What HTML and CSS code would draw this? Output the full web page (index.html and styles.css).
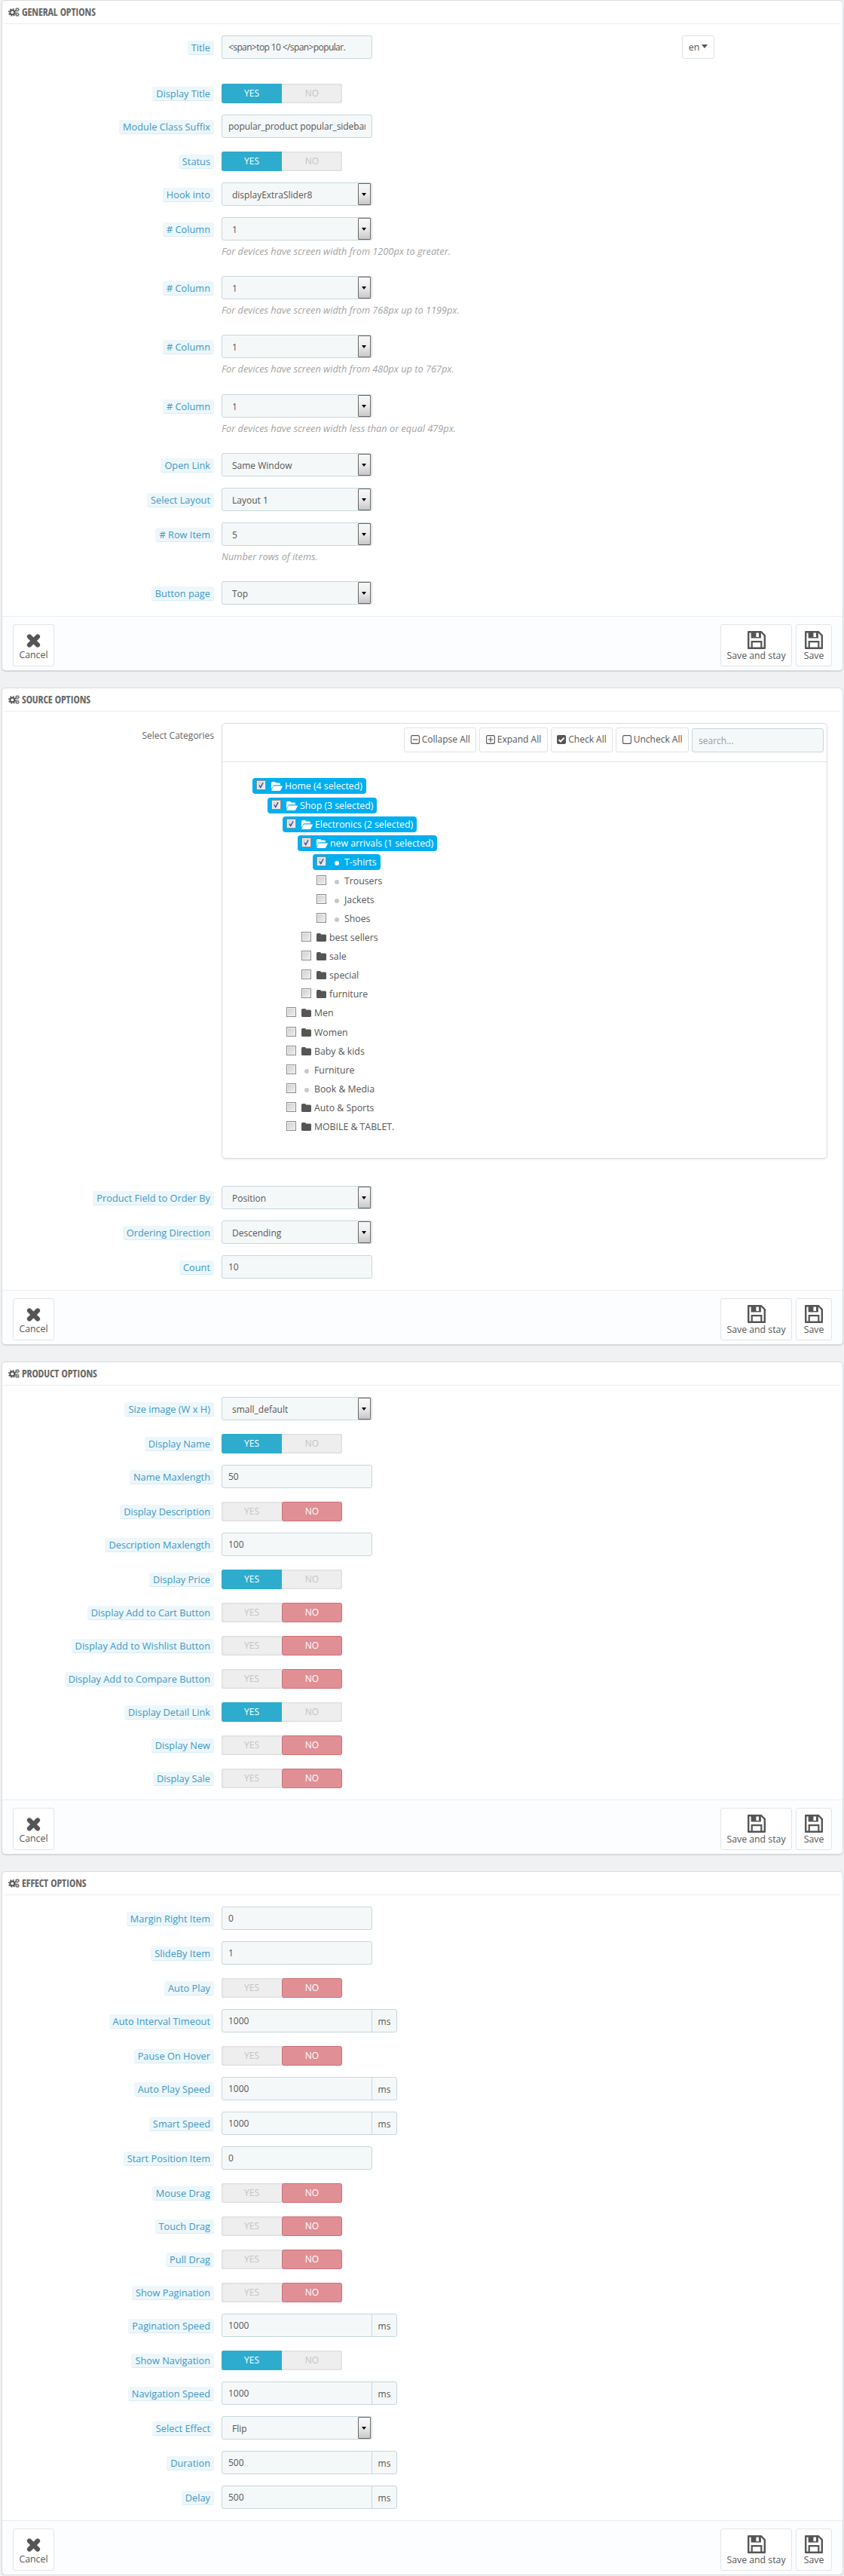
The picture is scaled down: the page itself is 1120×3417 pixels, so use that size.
FILE: index.html
```html
<!DOCTYPE html>
<html lang="en">
<head>
<meta charset="utf-8">
<title>Module options</title>
<link rel="stylesheet" href="styles.css">
</head>
<body>
<svg class="sprite" xmlns="http://www.w3.org/2000/svg">
  <symbol id="cogs" viewBox="0 0 15 12">
    <circle cx="5.3" cy="6.4" r="2.9" fill="none" stroke="#555" stroke-width="2"/>
    <circle cx="5.3" cy="6.4" r="4.6" fill="none" stroke="#555" stroke-width="1.6" stroke-dasharray="1.8 1.81"/>
    <circle cx="12" cy="2.7" r="1.5" fill="none" stroke="#555" stroke-width="1.1"/>
    <circle cx="12" cy="2.7" r="2.5" fill="none" stroke="#555" stroke-width="1" stroke-dasharray="1.1 1.06"/>
    <circle cx="12" cy="9.3" r="1.5" fill="none" stroke="#555" stroke-width="1.1"/>
    <circle cx="12" cy="9.3" r="2.5" fill="none" stroke="#555" stroke-width="1" stroke-dasharray="1.1 1.06"/>
  </symbol>
  <symbol id="times" viewBox="0 0 19 18">
    <path d="M4 3.5 15 14.5M15 3.5 4 14.5" fill="none" stroke="#555" stroke-width="6.2" stroke-linecap="round"/>
  </symbol>
  <symbol id="floppy" viewBox="0 0 24 24">
    <path fill="#555" fill-rule="evenodd" d="M1 0H18.5L24 5.5V23a1 1 0 0 1-1 1H1a1 1 0 0 1-1-1V1a1 1 0 0 1 1-1ZM2.4 2.4V21.6H4.6V13H19.4V21.6H21.6V6.5L17.9 2.6V9.4H4.6V2.4ZM6.8 15.2V21.6H17.2V15.2ZM11.4 2.4V7.9H15V2.4Z"/>
  </symbol>
  <symbol id="folder" viewBox="0 0 13 11">
    <path fill="#555" d="M1.5 0H4.6A1.5 1.5 0 0 1 6 1.5H11.5A1.5 1.5 0 0 1 13 3V9.5A1.5 1.5 0 0 1 11.5 11H1.5A1.5 1.5 0 0 1 0 9.5V1.5A1.5 1.5 0 0 1 1.5 0Z"/>
  </symbol>
  <symbol id="folder-open" viewBox="0 0 15 12">
    <path fill="#fff" d="M0 10V1.5A1.5 1.5 0 0 1 1.5 0H4.5A1.5 1.5 0 0 1 6 1.5H10.5A1.5 1.5 0 0 1 12 3V4.2H4A2.2 2.2 0 0 0 2.2 5.4ZM3.4 5.4H14.2C15 5.4 15.2 6 14.8 6.6L12.4 11A1.8 1.8 0 0 1 11 12H1C.3 12 .1 11.5.4 11L2.6 6A1 1 0 0 1 3.4 5.4Z"/>
  </symbol>
  <symbol id="tick" viewBox="0 0 13 13">
    <path d="M3.6 6.6 5.6 10.2 9.6 2.6" fill="none" stroke="#3b4a9c" stroke-width="1.6"/>
  </symbol>
  <symbol id="sq-minus" viewBox="0 0 12 12">
    <rect x=".6" y=".6" width="10.8" height="10.8" rx="2" fill="none" stroke="#555" stroke-width="1.1"/>
    <path d="M2.6 6H9.4" stroke="#555" stroke-width="1.2"/>
  </symbol>
  <symbol id="sq-plus" viewBox="0 0 12 12">
    <rect x=".6" y=".6" width="10.8" height="10.8" rx="2" fill="none" stroke="#555" stroke-width="1.1"/>
    <path d="M2.6 6H9.4M6 2.6V9.4" stroke="#555" stroke-width="1.2"/>
  </symbol>
  <symbol id="sq-check" viewBox="0 0 12 12">
    <rect width="12" height="12" rx="2" fill="#555"/>
    <path d="M2.6 6.2 5 8.6 9.6 3.6" fill="none" stroke="#fff" stroke-width="2"/>
  </symbol>
  <symbol id="sq-empty" viewBox="0 0 12 12">
    <rect x=".6" y=".6" width="10.8" height="10.8" rx="2" fill="none" stroke="#555" stroke-width="1.1"/>
  </symbol>
</svg>

<section class="panel">
  <h3 class="panel-heading"><svg class="cogs"><use href="#cogs"/></svg>General Options</h3>

  <div class="row row-title">
    <div class="lbl"><span class="tip">Title</span></div>
    <input class="input input-tight" type="text" value="&lt;span&gt;top 10 &lt;/span&gt;popular." readonly>
    <button class="lang" type="button">en<i class="caret"></i></button>
  </div>
  <div class="row row-switch">
    <div class="lbl"><span class="tip">Display Title</span></div>
    <div class="switch on"><span class="yes">YES</span><span class="no">NO</span></div>
  </div>
  <div class="row">
    <div class="lbl"><span class="tip">Module Class Suffix</span></div>
    <input class="input input-suffix" type="text" value="popular_product popular_sidebar" readonly>
  </div>
  <div class="row row-switch">
    <div class="lbl"><span class="tip">Status</span></div>
    <div class="switch on"><span class="yes">YES</span><span class="no">NO</span></div>
  </div>
  <div class="row">
    <div class="lbl"><span class="tip">Hook into</span></div>
    <div class="select"><span>displayExtraSlider8</span><i class="sel-btn"></i></div>
  </div>
  <div class="row">
    <div class="lbl"><span class="tip"># Column</span></div>
    <div class="field">
      <div class="select"><span>1</span><i class="sel-btn"></i></div>
      <p class="help">For devices have screen width from 1200px to greater.</p>
    </div>
  </div>
  <div class="row">
    <div class="lbl"><span class="tip"># Column</span></div>
    <div class="field">
      <div class="select"><span>1</span><i class="sel-btn"></i></div>
      <p class="help">For devices have screen width from 768px up to 1199px.</p>
    </div>
  </div>
  <div class="row">
    <div class="lbl"><span class="tip"># Column</span></div>
    <div class="field">
      <div class="select"><span>1</span><i class="sel-btn"></i></div>
      <p class="help help-wide">For devices have screen width from 480px up to 767px.</p>
    </div>
  </div>
  <div class="row">
    <div class="lbl"><span class="tip"># Column</span></div>
    <div class="field">
      <div class="select"><span>1</span><i class="sel-btn"></i></div>
      <p class="help">For devices have screen width less than or equal 479px.</p>
    </div>
  </div>
  <div class="row">
    <div class="lbl"><span class="tip">Open Link</span></div>
    <div class="select"><span>Same Window</span><i class="sel-btn"></i></div>
  </div>
  <div class="row">
    <div class="lbl"><span class="tip">Select Layout</span></div>
    <div class="select"><span>Layout 1</span><i class="sel-btn"></i></div>
  </div>
  <div class="row">
    <div class="lbl"><span class="tip"># Row Item</span></div>
    <div class="field">
      <div class="select"><span>5</span><i class="sel-btn"></i></div>
      <p class="help">Number rows of items.</p>
    </div>
  </div>
  <div class="row">
    <div class="lbl"><span class="tip">Button page</span></div>
    <div class="select"><span>Top</span><i class="sel-btn"></i></div>
  </div>

  <footer class="panel-footer">
    <button class="act act-cancel" type="button"><svg class="ic-times"><use href="#times"/></svg>Cancel</button>
    <button class="act act-stay" type="button"><svg class="ic-save"><use href="#floppy"/></svg>Save and stay</button>
    <button class="act act-save" type="button"><svg class="ic-save"><use href="#floppy"/></svg>Save</button>
  </footer>
</section>

<section class="panel">
  <h3 class="panel-heading"><svg class="cogs"><use href="#cogs"/></svg>Source Options</h3>

  <div class="row row-tree">
    <div class="lbl lbl-plain">Select Categories</div>
    <div class="tree-box">
      <div class="tree-tools">
        <button class="tool" type="button"><svg class="tool-ic"><use href="#sq-minus"/></svg>Collapse All</button>
        <button class="tool" type="button"><svg class="tool-ic"><use href="#sq-plus"/></svg>Expand All</button>
        <button class="tool" type="button"><svg class="tool-ic"><use href="#sq-check"/></svg>Check All</button>
        <button class="tool" type="button"><svg class="tool-ic"><use href="#sq-empty"/></svg>Uncheck All</button>
        <input class="input tree-search" type="text" placeholder="search..." readonly>
      </div>
      <div class="tree-body">
        <ul class="tree tree-root">
          <li>
            <div class="node sel"><i class="cb"><svg><use href="#tick"/></svg></i><svg class="fo"><use href="#folder-open"/></svg>Home (4 selected)</div>
            <ul class="tree tree-shift">
              <li>
                <div class="node sel"><i class="cb"><svg><use href="#tick"/></svg></i><svg class="fo"><use href="#folder-open"/></svg>Shop (3 selected)</div>
                <ul class="tree">
                  <li>
                    <div class="node sel"><i class="cb"><svg><use href="#tick"/></svg></i><svg class="fo"><use href="#folder-open"/></svg>Electronics (2 selected)</div>
                    <ul class="tree">
                      <li>
                        <div class="node sel"><i class="cb"><svg><use href="#tick"/></svg></i><svg class="fo"><use href="#folder-open"/></svg>new arrivals (1 selected)</div>
                        <ul class="tree">
                          <li><div class="node sel"><i class="cb"><svg><use href="#tick"/></svg></i><i class="dot"></i>T-shirts</div></li>
                          <li><div class="node"><i class="cb"></i><i class="dot"></i>Trousers</div></li>
                          <li><div class="node"><i class="cb"></i><i class="dot"></i>Jackets</div></li>
                          <li><div class="node"><i class="cb"></i><i class="dot"></i>Shoes</div></li>
                        </ul>
                      </li>
                      <li><div class="node"><i class="cb"></i><svg class="fc"><use href="#folder"/></svg>best sellers</div></li>
                      <li><div class="node"><i class="cb"></i><svg class="fc"><use href="#folder"/></svg>sale</div></li>
                      <li><div class="node"><i class="cb"></i><svg class="fc"><use href="#folder"/></svg>special</div></li>
                      <li><div class="node"><i class="cb"></i><svg class="fc"><use href="#folder"/></svg>furniture</div></li>
                    </ul>
                  </li>
                  <li><div class="node"><i class="cb"></i><svg class="fc"><use href="#folder"/></svg>Men</div></li>
                  <li class="shift"><div class="node"><i class="cb"></i><svg class="fc"><use href="#folder"/></svg>Women</div></li>
                  <li><div class="node"><i class="cb"></i><svg class="fc"><use href="#folder"/></svg>Baby &amp; kids</div></li>
                  <li><div class="node"><i class="cb"></i><i class="dot"></i>Furniture</div></li>
                  <li><div class="node"><i class="cb"></i><i class="dot"></i>Book &amp; Media</div></li>
                  <li><div class="node"><i class="cb"></i><svg class="fc"><use href="#folder"/></svg>Auto &amp; Sports</div></li>
                  <li><div class="node"><i class="cb"></i><svg class="fc"><use href="#folder"/></svg>MOBILE &amp; TABLET.</div></li>
                </ul>
              </li>
            </ul>
          </li>
        </ul>
      </div>
    </div>
  </div>
  <div class="row">
    <div class="lbl"><span class="tip">Product Field to Order By</span></div>
    <div class="select"><span>Position</span><i class="sel-btn"></i></div>
  </div>
  <div class="row">
    <div class="lbl"><span class="tip">Ordering Direction</span></div>
    <div class="select"><span>Descending</span><i class="sel-btn"></i></div>
  </div>
  <div class="row">
    <div class="lbl"><span class="tip">Count</span></div>
    <input class="input" type="text" value="10" readonly>
  </div>

  <footer class="panel-footer">
    <button class="act act-cancel" type="button"><svg class="ic-times"><use href="#times"/></svg>Cancel</button>
    <button class="act act-stay" type="button"><svg class="ic-save"><use href="#floppy"/></svg>Save and stay</button>
    <button class="act act-save" type="button"><svg class="ic-save"><use href="#floppy"/></svg>Save</button>
  </footer>
</section>

<section class="panel">
  <h3 class="panel-heading"><svg class="cogs"><use href="#cogs"/></svg>Product Options</h3>

  <div class="row">
    <div class="lbl"><span class="tip">Size image (W x H)</span></div>
    <div class="select"><span>small_default</span><i class="sel-btn"></i></div>
  </div>
  <div class="row row-switch">
    <div class="lbl"><span class="tip">Display Name</span></div>
    <div class="switch on"><span class="yes">YES</span><span class="no">NO</span></div>
  </div>
  <div class="row">
    <div class="lbl"><span class="tip">Name Maxlength</span></div>
    <input class="input" type="text" value="50" readonly>
  </div>
  <div class="row row-switch">
    <div class="lbl"><span class="tip">Display Description</span></div>
    <div class="switch off"><span class="yes">YES</span><span class="no">NO</span></div>
  </div>
  <div class="row">
    <div class="lbl"><span class="tip">Description Maxlength</span></div>
    <input class="input" type="text" value="100" readonly>
  </div>
  <div class="row row-switch">
    <div class="lbl"><span class="tip">Display Price</span></div>
    <div class="switch on"><span class="yes">YES</span><span class="no">NO</span></div>
  </div>
  <div class="row row-switch">
    <div class="lbl"><span class="tip">Display Add to Cart Button</span></div>
    <div class="switch off"><span class="yes">YES</span><span class="no">NO</span></div>
  </div>
  <div class="row row-switch">
    <div class="lbl"><span class="tip">Display Add to Wishlist Button</span></div>
    <div class="switch off"><span class="yes">YES</span><span class="no">NO</span></div>
  </div>
  <div class="row row-switch">
    <div class="lbl"><span class="tip">Display Add to Compare Button</span></div>
    <div class="switch off"><span class="yes">YES</span><span class="no">NO</span></div>
  </div>
  <div class="row row-switch">
    <div class="lbl"><span class="tip">Display Detail Link</span></div>
    <div class="switch on"><span class="yes">YES</span><span class="no">NO</span></div>
  </div>
  <div class="row row-switch">
    <div class="lbl"><span class="tip">Display New</span></div>
    <div class="switch off"><span class="yes">YES</span><span class="no">NO</span></div>
  </div>
  <div class="row row-switch">
    <div class="lbl"><span class="tip">Display Sale</span></div>
    <div class="switch off"><span class="yes">YES</span><span class="no">NO</span></div>
  </div>

  <footer class="panel-footer">
    <button class="act act-cancel" type="button"><svg class="ic-times"><use href="#times"/></svg>Cancel</button>
    <button class="act act-stay" type="button"><svg class="ic-save"><use href="#floppy"/></svg>Save and stay</button>
    <button class="act act-save" type="button"><svg class="ic-save"><use href="#floppy"/></svg>Save</button>
  </footer>
</section>

<section class="panel">
  <h3 class="panel-heading"><svg class="cogs"><use href="#cogs"/></svg>Effect Options</h3>

  <div class="row">
    <div class="lbl"><span class="tip">Margin Right Item</span></div>
    <input class="input" type="text" value="0" readonly>
  </div>
  <div class="row">
    <div class="lbl"><span class="tip">SlideBy Item</span></div>
    <input class="input" type="text" value="1" readonly>
  </div>
  <div class="row row-switch">
    <div class="lbl"><span class="tip">Auto Play</span></div>
    <div class="switch off"><span class="yes">YES</span><span class="no">NO</span></div>
  </div>
  <div class="row">
    <div class="lbl"><span class="tip">Auto Interval Timeout</span></div>
    <div class="group"><input class="input" type="text" value="1000" readonly><span class="addon">ms</span></div>
  </div>
  <div class="row row-switch">
    <div class="lbl"><span class="tip">Pause On Hover</span></div>
    <div class="switch off"><span class="yes">YES</span><span class="no">NO</span></div>
  </div>
  <div class="row">
    <div class="lbl"><span class="tip">Auto Play Speed</span></div>
    <div class="group"><input class="input" type="text" value="1000" readonly><span class="addon">ms</span></div>
  </div>
  <div class="row">
    <div class="lbl"><span class="tip">Smart Speed</span></div>
    <div class="group"><input class="input" type="text" value="1000" readonly><span class="addon">ms</span></div>
  </div>
  <div class="row">
    <div class="lbl"><span class="tip">Start Position Item</span></div>
    <input class="input" type="text" value="0" readonly>
  </div>
  <div class="row row-switch">
    <div class="lbl"><span class="tip">Mouse Drag</span></div>
    <div class="switch off"><span class="yes">YES</span><span class="no">NO</span></div>
  </div>
  <div class="row row-switch">
    <div class="lbl"><span class="tip">Touch Drag</span></div>
    <div class="switch off"><span class="yes">YES</span><span class="no">NO</span></div>
  </div>
  <div class="row row-switch">
    <div class="lbl"><span class="tip">Pull Drag</span></div>
    <div class="switch off"><span class="yes">YES</span><span class="no">NO</span></div>
  </div>
  <div class="row row-switch">
    <div class="lbl"><span class="tip">Show Pagination</span></div>
    <div class="switch off"><span class="yes">YES</span><span class="no">NO</span></div>
  </div>
  <div class="row">
    <div class="lbl"><span class="tip">Pagination Speed</span></div>
    <div class="group"><input class="input" type="text" value="1000" readonly><span class="addon">ms</span></div>
  </div>
  <div class="row row-switch">
    <div class="lbl"><span class="tip">Show Navigation</span></div>
    <div class="switch on"><span class="yes">YES</span><span class="no">NO</span></div>
  </div>
  <div class="row">
    <div class="lbl"><span class="tip">Navigation Speed</span></div>
    <div class="group"><input class="input" type="text" value="1000" readonly><span class="addon">ms</span></div>
  </div>
  <div class="row">
    <div class="lbl"><span class="tip">Select Effect</span></div>
    <div class="select"><span>Flip</span><i class="sel-btn"></i></div>
  </div>
  <div class="row">
    <div class="lbl"><span class="tip">Duration</span></div>
    <div class="group"><input class="input" type="text" value="500" readonly><span class="addon">ms</span></div>
  </div>
  <div class="row">
    <div class="lbl"><span class="tip">Delay</span></div>
    <div class="group"><input class="input" type="text" value="500" readonly><span class="addon">ms</span></div>
  </div>

  <footer class="panel-footer">
    <button class="act act-cancel" type="button"><svg class="ic-times"><use href="#times"/></svg>Cancel</button>
    <button class="act act-stay" type="button"><svg class="ic-save"><use href="#floppy"/></svg>Save and stay</button>
    <button class="act act-save" type="button"><svg class="ic-save"><use href="#floppy"/></svg>Save</button>
  </footer>
</section>
</body>
</html>
```
FILE: styles.css
```css
* { box-sizing: border-box; }

html, body { background: #eff1f3; }

body {
  margin: 0;
  padding: 0 1px 0 2px;
  font-family: "Open Sans", "Liberation Sans", sans-serif;
  font-size: 12px;
  line-height: 18px;
  color: #555;
}

.sprite { display: none; }

.panel {
  background: #fff;
  border: 1px solid #d9dcde;
  border-radius: 5px;
  box-shadow: 0 1px 1px rgba(0, 0, 0, .12);
  margin-bottom: 22px;
}
.panel:last-child { margin-bottom: 0; }

.panel-heading {
  display: flex;
  align-items: center;
  height: 31px;
  margin: 0 3px 15px;
  padding: 0 0 1px 5px;
  border-bottom: 1px solid #eaedef;
  font-family: "Open Sans Condensed", "Liberation Sans Narrow", sans-serif;
  font-size: 14px;
  font-weight: 400;
  letter-spacing: -.15px;
  line-height: 18px;
  text-transform: uppercase;
  color: #666;
}

.cogs { width: 15px; height: 12px; margin-right: 3px; flex: none; }

.row {
  display: flex;
  align-items: flex-start;
  gap: 10px;
  margin-bottom: 15px;
}
.row-title { margin-bottom: 30px; }
.row-switch { padding-top: 3px; }
.row-switch .lbl { margin-top: -3px; }
.row-tree { margin-bottom: 36px; }

.lbl {
  flex: none;
  width: 281px;
  padding-top: 7px;
  text-align: right;
  white-space: nowrap;
}
.lbl-plain { padding-top: 8px; color: #666; }

.tip {
  display: inline-block;
  padding: 0 5px;
  height: 19px;
  background: #edf7fb;
  border-bottom: 1px solid #d9ecf5;
  border-radius: 3px;
  font-size: 12.8px;
  color: #3f97c4;
  vertical-align: top;
}

.input {
  display: block;
  width: 200px;
  height: 31px;
  padding: 0 8px;
  background: #f5f8f9;
  border: 1px solid #c7d6db;
  border-radius: 3px;
  font: inherit;
  color: #555;
  outline: none;
}
.input::placeholder { color: #999; opacity: 1; }
.input-tight { letter-spacing: -.6px; }
.input-suffix { letter-spacing: -.08px; }

.lang {
  margin-left: 401px;
  width: 43px;
  height: 31px;
  padding: 0;
  background: #fff;
  border: 1px solid #dcdfe1;
  border-radius: 3px;
  font: inherit;
  font-size: 12.5px;
  color: #555;
}
.caret {
  display: inline-block;
  margin-left: 3px;
  border-top: 5px solid #555;
  border-left: 4px solid transparent;
  border-right: 4px solid transparent;
  vertical-align: 3px;
}

.switch {
  display: flex;
  width: 160px;
  height: 26px;
  background: #eee;
  border-radius: 3px;
  box-shadow: inset 0 0 3px rgba(0, 0, 0, .18);
  line-height: 26px;
  text-align: center;
  color: #c4c4c4;
}
.switch span { flex: 1 1 50%; border-radius: 3px; }
.switch.on .yes { background: #2eacce; color: #fff; border-radius: 3px 0 0 3px; }
.switch.off .no {
  background: #e08f95;
  border: 1px solid #cc7076;
  line-height: 24px;
  color: #fff;
}

.field { width: 200px; flex: none; }

.select {
  display: flex;
  align-items: center;
  justify-content: space-between;
  width: 200px;
  height: 31px;
  padding: 2px 1px 0 13px;
  background: #f5f8f9;
  border: 1px solid #c7d6db;
  border-radius: 3px;
  color: #555;
}
.sel-btn {
  position: relative;
  flex: none;
  width: 17px;
  height: 29px;
  margin-top: -2px;
  border: 1px solid #666;
  border-radius: 1px;
  background: linear-gradient(#f8f8f8, #ededed 45%, #c8c8c8);
}
.sel-btn::after {
  content: "";
  position: absolute;
  left: 4px;
  top: 12px;
  border-top: 4px solid #000;
  border-left: 3.5px solid transparent;
  border-right: 3.5px solid transparent;
}

.help {
  margin: 5px 0 9px;
  width: 400px;
  font-size: 12.75px;
  font-style: italic;
  color: #a3a3a3;
  white-space: nowrap;
}
.help-wide { margin-bottom: 10px; }

.group { display: flex; }
.group .input { border-radius: 3px 0 0 3px; }
.addon {
  width: 34px;
  height: 31px;
  margin-left: -1px;
  background: #f5f8f9;
  border: 1px solid #c7d6db;
  border-radius: 0 3px 3px 0;
  line-height: 31px;
  text-align: center;
  color: #555;
}

.tree-box {
  width: 804px;
  height: 578px;
  border: 1px solid #d9dcde;
  border-radius: 5px;
  box-shadow: 0 2px 1px rgba(0, 0, 0, .05);
}
.tree-tools {
  display: flex;
  justify-content: flex-end;
  gap: 4px;
  height: 51px;
  padding: 5px 4px 0 0;
  border-bottom: 1px solid #dfe2e4;
}
.tool {
  display: flex;
  align-items: center;
  height: 33px;
  padding: 0 7.5px 2px;
  background: #fff;
  border: 1px solid #dfe2e4;
  border-radius: 3px;
  font: inherit;
  color: #555;
}
.tool-ic { width: 12px; height: 12px; margin-right: 3px; flex: none; }
.tree-search { width: 175px; height: 32px; margin-top: 1px; }

.tree-body { padding: 21px 0 0 40px; font-size: 12.3px; }
.tree { list-style: none; margin: 0; padding: 0 0 0 20px; }
.tree-root { padding-left: 0; }
.tree-shift { margin-top: 1px; }
.shift { margin-top: 1px; }

.node {
  display: inline-flex;
  align-items: center;
  height: 21px;
  margin-bottom: 4px;
  padding: 0 5px;
  border-radius: 4px;
  line-height: 21px;
  white-space: nowrap;
  vertical-align: top;
}
.tree li { display: block; height: auto; }
.node.sel { background: #00aff0; color: #fff; }

.cb {
  display: block;
  flex: none;
  width: 13px;
  height: 13px;
  margin: -3px 7px 0 0;
  border: 1px solid #8c8c8c;
  box-shadow: inset 0 0 0 1px #f0f0f0;
  background: linear-gradient(135deg, #cfcfcf, #efefef);
}
.cb svg { display: block; width: 11px; height: 11px; }

.fc { width: 13px; height: 11px; margin-right: 4px; flex: none; }
.fo { width: 15px; height: 12px; margin-right: 3px; flex: none; }

.dot {
  flex: none;
  width: 6px;
  height: 6px;
  margin: 2px 7px 0 4px;
  border-radius: 50%;
  background: #c8c8c8;
}
.node.sel .dot { background: #fff; }

.panel-footer {
  display: flex;
  gap: 5px;
  height: 72px;
  padding: 10px 14px 0;
  background: #fcfdfe;
  border-top: 1px solid #eaedef;
  border-radius: 0 0 5px 5px;
}
.act {
  display: flex;
  flex-direction: column;
  align-items: center;
  height: 56px;
  padding: 0;
  background: #fff;
  border: 1px solid #e2e4e6;
  border-radius: 3px;
  font: inherit;
  font-size: 12.3px;
  color: #555;
}
.act-cancel { width: 55px; margin-right: auto; padding-top: 12px; }
.act-stay { width: 95px; padding-top: 8px; }
.act-save { width: 48px; padding-top: 8px; }
.ic-times { width: 19px; height: 18px; margin-bottom: 1px; flex: none; }
.ic-save { width: 24px; height: 24px; flex: none; }
```
